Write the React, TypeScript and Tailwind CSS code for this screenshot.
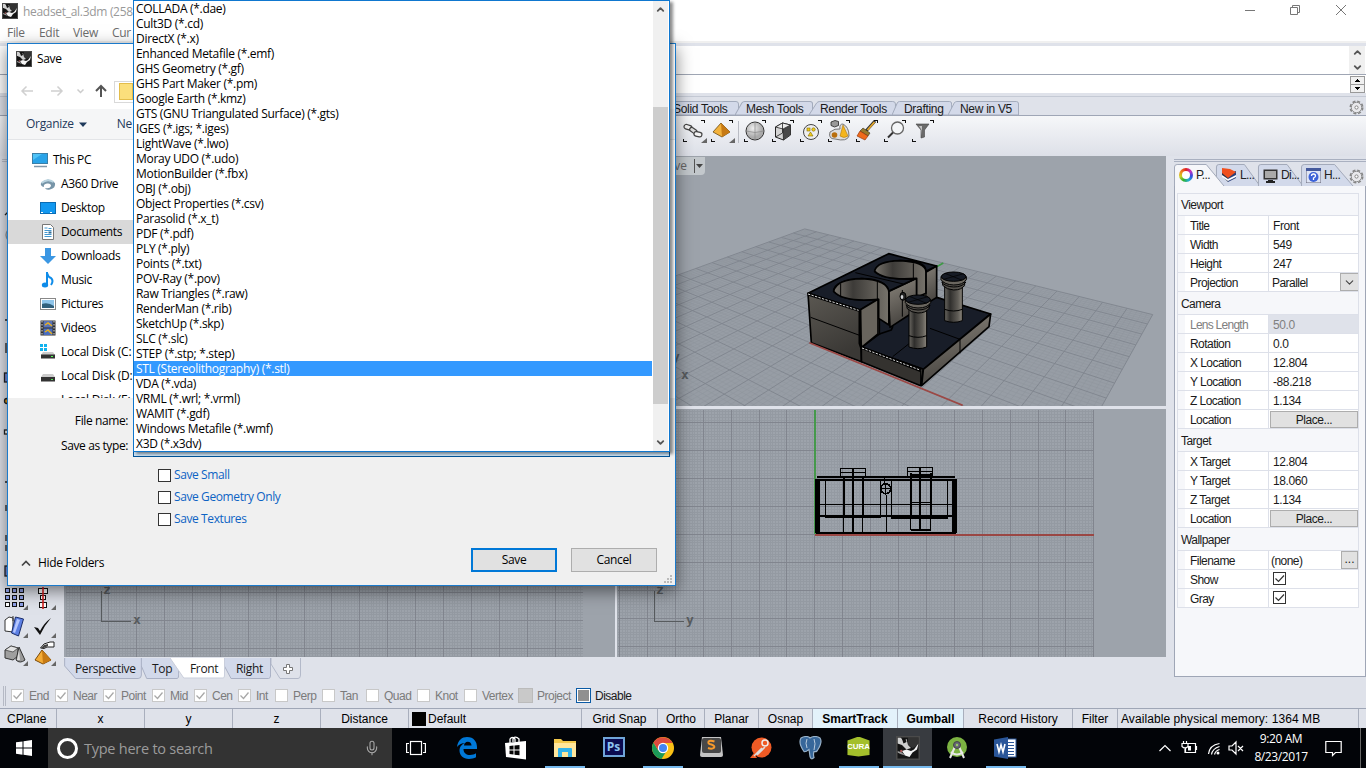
import React from "react";
import { ChevronDown, ChevronUp, Mic } from "lucide-react";

const SEGOE = "font-['Open_Sans','Noto_Sans',sans-serif]";
const ARIAL = "font-['Liberation_Sans',sans-serif]";

function RhinoIcon({ size = 16 }: { size?: number }) {
  return (
    <svg width={size} height={size} viewBox="0 0 16 16" className="shrink-0">
      <rect width="16" height="16" fill="#161616" />
      <path d="M8 1h7v5l-4 2-3-2z" fill="#333" />
      <path d="M1 1h2l2 2 2-1 1 4 2 2-3 1-3-3-3-1z" fill="#cfcfcf" />
      <path d="M4 2l2-1 1 3-2 1zM1 5l3 2v3L1 9z" fill="#111" />
      <path d="M15 5l-1 4-3 2-2 3-3-1-2-3 3-1 3 1 2-1z" fill="#f4f4f4" />
      <path d="M1 10l3 1 2 2-3-1-2-1z" fill="#9a9a9a" />
      <circle cx="3.500" cy="10" r=".8" fill="#a55" />
      <rect x=".5" y=".5" width="15" height="15" fill="none" stroke="#4a4a4a" />
    </svg>
  );
}

function Gear() {
  return (
    <svg width="15" height="15" viewBox="0 0 15 15" className="shrink-0">
      <circle cx="7.5" cy="7.5" r="6.2" fill="none" stroke="#858585" strokeWidth="1.6" strokeDasharray="3 1.87" />
      <circle cx="7.5" cy="7.5" r="5.2" fill="#e9e9ec" stroke="#858585" strokeWidth=".9" />
      <circle cx="7.5" cy="7.5" r="1.6" fill="#fff" stroke="#858585" />
    </svg>
  );
}

/* ---------- window header ---------- */

function TitleBar() {
  return (
    <div className={`flex h-[22px] items-center bg-white pl-[2px] ${SEGOE}`}>
      <RhinoIcon />
      <span className="mt-px ml-[5px] grow text-[12px] tracking-[-0.3px] text-[#999]">headset_al.3dm (258</span>
      <svg width="126" height="22" viewBox="1240 0 126 22" fill="none" stroke="#777">
        <path d="M1245 10.5h10" />
        <path d="M1290.500 7.500h7v7h-7zM1292.500 7.500v-2h7v7h-2" />
        <path d="M1336 5l10 10M1346 5l-10 10" />
      </svg>
    </div>
  );
}

function MenuBar() {
  return (
    <div className={`flex h-[19px] items-center bg-white pt-[2px] pl-[7px] text-[12px] tracking-[-0.3px] text-[#6d6d6d] ${SEGOE}`}>
      <span className="w-[32px]">File</span>
      <span className="w-[34px]">Edit</span>
      <span className="w-[39px]">View</span>
      <span>Cur</span>
    </div>
  );
}

function CommandArea() {
  return (
    <div className="flex h-[55px] shrink-0 flex-col border-t-2 border-[#f0f0f0] bg-[#dfe2ea] pt-[3px]">
      <div className="flex h-[29px] justify-end border-b border-[#9fa6b4] bg-white">
        <div className="mr-[1px] flex w-4 flex-col items-center justify-between bg-[#f0f0f0] py-[1px] text-[#555]">
          <ChevronUp size={11} strokeWidth={4} />
          <ChevronDown size={11} strokeWidth={4} />
        </div>
      </div>
      <div className="flex h-[18px] justify-end bg-white">
        <svg width="17" height="18" viewBox="0 0 17 18" shapeRendering="crispEdges">
          <rect x="1" y="1" width="14" height="8" fill="#f0f0f0" stroke="#999" />
          <rect x="1" y="9" width="14" height="8" fill="#f0f0f0" stroke="#999" />
          <path d="M5 7h6l-3-3zM5 12h6l-3 3z" />
        </svg>
      </div>
    </div>
  );
}

const toolTabs = [
  { t: "Solid Tools", c: "w-[79px] pl-[13px]" },
  { t: "Mesh Tools", c: "w-[78px] pl-[11px]" },
  { t: "Render Tools", c: "w-[87px] pl-[11px]" },
  { t: "Drafting", c: "w-[60px] pl-[12px]" },
  { t: "New in V5", c: "w-[71px] pl-[12px]" },
];

function ToolTabs() {
  return (
    <div className="flex h-[20px] shrink-0 items-end border-y border-t-[#c5cad5] border-b-[#9fa6b6] bg-[#dfe2ea] pl-[660px]">
      {toolTabs.map((tab) => (
        <div key={tab.t} className={`relative -mr-1 flex h-[14px] items-center ${tab.c}`}>
          <svg className="absolute inset-0 h-full w-full" viewBox="0 0 80 14" preserveAspectRatio="none">
            <path d="M0 14L7 2Q8 .5 10 .5H77Q79.500 .5 79.500 3V14z" fill="#d3d9e9" stroke="#a3abbc" vectorEffect="non-scaling-stroke" />
          </svg>
          <span className={`relative mt-px whitespace-nowrap text-[12px] leading-none tracking-[-0.3px] text-[#1a1a1a] ${ARIAL}`}>{tab.t}</span>
        </div>
      ))}
      <div className="grow" />
      <div className="mr-[2px]"><Gear /></div>
    </div>
  );
}

function ToolCell({ children, menu }: { children: React.ReactNode; menu?: boolean }) {
  return (
    <svg width="28" height="26" viewBox="0 0 28 26" className="shrink-0">
      {children}
      <path d="M21 1.500h3.500V4M3.500 20v2.500H7" fill="none" stroke="#111" shapeRendering="crispEdges" />
      {menu && <path d="M27 19v5h-6z" fill="#666" />}
    </svg>
  );
}

function ToolBar() {
  return (
    <div className="flex h-[40px] shrink-0 items-start bg-gradient-to-b from-[#f6f7f9] to-[#dde0e8] pt-[3px] pl-[680px]">
      <ToolCell menu>
        <g fill="none" stroke="#444" strokeWidth="1.200">
          <rect x="4" y="6" width="8" height="4.500" rx="2.200" transform="rotate(18 8 8)" fill="#f4f4f4" />
          <rect x="9" y="9.500" width="8" height="4" rx="2" transform="rotate(35 13 12)" fill="#ddd" />
          <rect x="14" y="13" width="8" height="4.500" rx="2.200" transform="rotate(12 18 15)" fill="#f4f4f4" />
        </g>
      </ToolCell>
      <ToolCell menu>
        <path d="M13 4L22 13l-8 5-9-5z" fill="#f2b23c" stroke="#6b4a10" strokeWidth=".8" />
        <path d="M13 4l1 14 8-5z" fill="#c77a14" />
      </ToolCell>
      <div className="mx-[2px] mt-[2px] h-[22px] w-px bg-[#b9bcc4]" />
      <ToolCell>
        <defs>
          <radialGradient id="ball" cx=".4" cy=".35"><stop offset="0" stopColor="#eee" /><stop offset="1" stopColor="#aaa" /></radialGradient>
        </defs>
        <circle cx="14" cy="12" r="9" fill="url(#ball)" stroke="#333" />
        <path d="M5 12q9 3 18 0M14 3v18" fill="none" stroke="#888" strokeWidth=".7" />
      </ToolCell>
      <ToolCell>
        <path d="M6.500 8l7-4 8 2v10l-7 5-8-3z" fill="#d4d4d4" stroke="#222" />
        <path d="M14 10l7.500-4v10l-7 5z" fill="#484848" />
        <path d="M6.500 8l7.500 2 7.500-4-8-2z" fill="#ededed" stroke="#222" strokeWidth=".8" />
        <path d="M14 10l.5 11M6.500 18l7-4V4" fill="none" stroke="#222" strokeWidth=".8" />
      </ToolCell>
      <ToolCell>
        <circle cx="14" cy="13" r="7.500" fill="#eee" stroke="#444" />
        <g fill="#f1cd1b" stroke="#806a00" strokeWidth=".6"><rect x="10" y="9" width="3" height="3" /><circle cx="16.500" cy="10.500" r="1.700" /><path d="M11 17h5l-2.500-4z" /></g>
      </ToolCell>
      <ToolCell>
        <path d="M5 13q-2 7 5 7 12 3 14-3 0-9-6-12-4 0-3 5-5-1-10 3z" fill="#ddd" stroke="#777" />
        <circle cx="9.500" cy="16" r="2.800" fill="#b86e0c" />
        <path d="M15 17l3-11 5 11q-4 3-8 0z" fill="#f4b51c" stroke="#a66c00" strokeWidth=".5" />
        <path d="M6 3l4-1.500 3.500 1v4l-4 1.500-3.500-1.500z" fill="#999" stroke="#222" strokeWidth=".8" />
      </ToolCell>
      <ToolCell>
        <path d="M22 2l-9 10" stroke="#333" strokeWidth="3" />
        <path d="M21.500 3l-7 8" stroke="#e3a72c" strokeWidth="1.800" />
        <path d="M10 9l7 5-2 3-8-5z" fill="#9a7a2a" stroke="#332" strokeWidth=".6" />
        <path d="M7 12l8 5-3 4-8-4z" fill="#ef6a1a" stroke="#8b2a00" strokeWidth=".6" />
      </ToolCell>
      <ToolCell>
        <circle cx="16.500" cy="9" r="6" fill="#f4f6f8" stroke="#666" strokeWidth="1.300" />
        <path d="M12 13.500L7 18.500" stroke="#333" strokeWidth="2" />
      </ToolCell>
      <ToolCell>
        <path d="M7 5h13l-4.500 6v7l-3.500 1v-8z" fill="#6a6a6a" stroke="#444" strokeWidth=".6" />
        <path d="M10 7h3v10l-.5-6z" fill="#c4c4c4" />
      </ToolCell>
    </div>
  );
}

/* ---------- viewports ---------- */

function range(n: number) {
  return Array.from({ length: n }, (_, i) => i);
}

function OrthoGrid(p: { x0: number; x1: number; y0: number; y1: number; mx: number; my: number; step: number }) {
  const minor: string[] = [];
  const major: string[] = [];
  const s = p.step / 10;
  for (let k = -300; k <= 300; k++) {
    const x = Math.round(p.mx + k * s) + 0.5;
    const y = Math.round(p.my + k * s) + 0.5;
    const list = k % 10 === 0 ? major : minor;
    if (x >= p.x0 && x <= p.x1) list.push(`M${x} ${p.y0}V${p.y1}`);
    if (y >= p.y0 && y <= p.y1) list.push(`M${p.x0} ${y}H${p.x1}`);
  }
  return (
    <g fill="none" shapeRendering="crispEdges">
      <path d={minor.join("")} stroke="#949aa2" />
      <path d={major.join("")} stroke="#81858e" />
    </g>
  );
}

function AxisMark({ x, y, a, b }: { x: number; y: number; a: string; b: string }) {
  return (
    <g fill="#575b5e" className="font-['DejaVu_Sans_Mono',monospace] text-[13px] font-bold">
      <path d={`M${x + 0.5} ${y - 30}V${y + 0.5}h29`} fill="none" stroke="#575b5e" shapeRendering="crispEdges" />
      <text x={x + 2} y={y - 27}>{b}</text>
      <text x={x + 32} y={y + 2.5}>{a}</text>
    </g>
  );
}

function project(u: number, v: number) {
  const w = 1 - 0.2815 * u + 0.372 * v;
  return `${((810 - 36.8 * u + 483.8 * v) / w).toFixed(1)} ${((342.7 - 17.7 * u + 18.1 * v) / w).toFixed(1)}`;
}

function PerspectiveGrid() {
  const minor: string[] = [];
  const major: string[] = [];
  for (const i of range(101)) {
    const t = -1 + i / 50;
    const list = i % 5 === 0 ? major : minor;
    list.push(`M${project(t, -1)}L${project(t, 1)}M${project(-1, t)}L${project(1, t)}`);
  }
  return (
    <g fill="none">
      <path d={`M${project(-1, 1)}L${project(1, 1)}L${project(1, -1)}L${project(-1, -1)}z`} fill="#979da5" />
      <path d={minor.join("")} stroke="#8f959d" strokeWidth=".5" />
      <path d={major.join("")} stroke="#7f848d" strokeWidth=".9" />
    </g>
  );
}

function Post({ x, y, h }: { x: number; y: number; h: number }) {
  return (
    <g transform={`translate(${x} ${y})`} stroke="#000" strokeWidth="3">
      <path d={`M-27 30V${h - 6}Q0 ${h + 4} 26 ${h - 6}V30z`} fill="url(#post)" />
      <path d={`M-27 ${h - 40}Q0 ${h - 30} 26 ${h - 40}`} fill="none" strokeWidth="3" />
      <path d="M-33 14v12q12 13 33 14 24 0 33-14v-12" fill="#55524d" />
      <path d="M-38 0v9q10 15 38 16 29 0 38-16V0z" fill="#6a665f" />
      <path d="M-37 16q12 14 37 15 26 0 37-15" fill="none" />
      <ellipse cx="0" cy="0" rx="37" ry="14" fill="#161b25" />
      <path d="M-30 8L30-9M-26-10L26 11" strokeWidth="2" />
    </g>
  );
}

function HeadsetModel() {
  return (
    <g transform="translate(670 210) scale(.33333)" strokeLinejoin="round">
      <defs>
        <linearGradient id="post"><stop offset="0" stopColor="#6b6862" /><stop offset=".3" stopColor="#2f2e2c" /><stop offset=".75" stopColor="#5f5c56" /><stop offset="1" stopColor="#8a857c" /></linearGradient>
        <linearGradient id="bore"><stop offset="0" stopColor="#77736c" /><stop offset=".35" stopColor="#3d3b38" /><stop offset="1" stopColor="#77736b" /></linearGradient>
        <linearGradient id="face" x2=".4" y2="1"><stop offset="0" stopColor="#5b5852" /><stop offset="1" stopColor="#3a3835" /></linearGradient>
        <linearGradient id="side" x2=".3" y2="1"><stop offset="0" stopColor="#8b867d" /><stop offset="1" stopColor="#45423e" /></linearGradient>
      </defs>
      <path d="M800 170L820 159" stroke="#3f9a46" strokeWidth="5" />
      <g stroke="#000" strokeWidth="5">
        <path d="M574 412L740 290L800 262L962 312L760 478z" fill="#181d28" />
        <path d="M574 412L760 478L752 527L574 455z" fill="#34322f" />
        <path d="M760 478L962 312L957 350L755 527z" fill="url(#side)" />
        <path d="M628 320L668 350L664 360L628 372z" fill="#181d28" />
        <path d="M740 205L770 185L800 168V262L740 300z" fill="url(#side)" />
        <path d="M655 245L740 205V300L660 352z" fill="url(#side)" />
        <path d="M414 250L656 131L800 168L768 184Q768 150 690 152Q618 160 614 185Q640 210 735 207L655 244Q650 208 575 206Q492 212 491 244Q520 275 624 268L570 300z" fill="#181d28" />
        <path d="M614 183Q620 154 690 152Q768 156 768 186V250L740 262V205Q640 212 614 183z" fill="url(#bore)" />
        <path d="M491 244Q498 208 575 206Q655 210 657 248V345L626 325V268Q520 278 491 244z" fill="url(#bore)" />
        <path d="M414 250L570 300L574 455L424 398z" fill="url(#face)" />
        <path d="M570 300L624 268V372L580 408L574 412z" fill="#68645d" />
      </g>
      <path d="M422 322L574 378M556 188L700 222M656 345V240M768 184V258M730 160V205M512 222V262M622 214V270M697 240V320M780 355L870 388V430M716 402L668 440M752 482V527M574 412V455" fill="none" stroke="#000" strokeWidth="3" />
      <path d="M414 252L570 302V400L574 412L752 482" fill="none" stroke="#000" strokeWidth="9" />
      <path d="M414 252L566 301M576 414L750 480" fill="none" stroke="#d9d9d9" strokeWidth="3" strokeDasharray="7 4" />
      <ellipse cx="699" cy="259" rx="9" ry="12" fill="#222" stroke="#000" strokeWidth="3" />
      <ellipse cx="696" cy="261" rx="4" ry="6" fill="#cfd2d6" />
      <Post x={851} y={200} h={138} />
      <Post x={744} y={269} h={148} />
      <path d="M418 398L878 586" stroke="#9c4845" strokeWidth="5" />
    </g>
  );
}

function RightWireframe() {
  return (
    <g transform="translate(600 400) scale(.33333)" fill="none" stroke="#000" shapeRendering="crispEdges">
      <path d="M645 30V402" stroke="#46994b" strokeWidth="5" />
      <path d="M645 404.500H1482" stroke="#9a4744" strokeWidth="6" />
      <path d="M652 236V400M1064 236V400" strokeWidth="14" />
      <path d="M652 231H1066M652 239H1066M648 399H1068" strokeWidth="6" />
      <path d="M660 348H1058M676 351H842M874 353H1044M932 224H998" strokeWidth="6" />
      <path d="M732 231V346M759 206V400M789 231V346M934 220V350M960 203V392M993 220V346M932 390H992" strokeWidth="6" />
      <path d="M660 313.500H1058M936 307.500H996M676.500 238V351M842 238V351M859 284V399M855 231V250M874.500 238V353M1042.500 238V350M731 346V399M788 346V399M931.500 350V390M992 346V390M721 217H797M922 216H998" strokeWidth="3" />
      <path d="M721 206H797V230H721zM922 203H998V230H922z" strokeWidth="4" />
      <path d="M841 266H875M857 250V284" strokeWidth="4" />
      <circle cx="857" cy="266" r="15" strokeWidth="5" />
    </g>
  );
}

function Viewports() {
  return (
    <div className="flex h-[502px] w-[1102px] shrink-0 gap-[2px] bg-[#dfe2ea]">
      <div className="h-[501px] w-[551px] bg-[#9da3ab]">
        <svg width="551" height="501" viewBox="64 156 551 501">
          <OrthoGrid x0={66} x1={583} y0={410} y1={657} mx={80} my={592} step={27.94} />
          <AxisMark x={101} y={621} a="x" b="z" />
        </svg>
      </div>
      <div className="flex flex-col gap-[3px]">
        <div className="relative h-[250px] w-[549px] bg-[#9da3ab]">
          <svg width="549" height="250" viewBox="617 156 549 250">
            <PerspectiveGrid />
            <g fill="#575b5e" className="font-['DejaVu_Sans_Mono',monospace] text-[13px] font-bold"><text x="672" y="361">y</text><text x="681" y="379">x</text></g>
            <HeadsetModel />
          </svg>
          <div className={`absolute top-px left-0 flex h-[18px] w-[88px] items-center justify-end rounded-br bg-[#c3c8cc] text-[12px] text-[#666] ${SEGOE}`}>
            <span>Perspective</span>
            <svg width="18" height="16" viewBox="0 0 18 16"><path d="M7.500 1v14" stroke="#555" /><path d="M9 6h7l-3.500 4z" fill="#444" /></svg>
          </div>
        </div>
        <svg width="549" height="248" viewBox="617 409 549 248" className="bg-[#9da3ab]">
          <OrthoGrid x0={618} x1={1094} y0={410} y1={657} mx={619} my={534} step={27.9} />
          <RightWireframe />
          <AxisMark x={654} y={621} a="y" b="z" />
        </svg>
      </div>
    </div>
  );
}

function SideTools() {
  return (
    <svg width="64" height="527" viewBox="0 156 64 527" className="shrink-0">
      <path d="M2 159.500h60M2 161.500h60" stroke="#b9bdc8" shapeRendering="crispEdges" />
      <g stroke="#222" strokeWidth="1.300">
        <path d="M5 215l3-3M5 320h3M6 343v10M5 482h4M6 505v6M6 535v6M6 545v6" />
        <path d="M8 230q-4 5 0 10" stroke="#999" fill="none" />
        <rect x="4.500" y="373" width="8" height="9" fill="#7a8ee0" />
        <rect x="4.500" y="430" width="5" height="4" fill="#fff" />
        <rect x="5" y="566" width="8" height="10" fill="#7a8ee0" />
        <circle cx="7" cy="401" r="2.500" fill="#e89a1a" />
      </g>
      <g stroke="#111" strokeWidth="1">
        {range(9).map((i) => (
          <rect key={i} x={5.5 + (i % 3) * 7} y={588.5 + Math.floor(i / 3) * 7} width="4" height="4" fill={i === 6 ? "#fff" : "#8ea0e8"} />
        ))}
      </g>
      <g stroke="#111" fill="#fff"><rect x="38.500" y="588.500" width="9" height="5" /><rect x="40.500" y="595.500" width="5" height="4" /><rect x="39.500" y="602.500" width="7" height="5" /></g>
      <path d="M43 587v22" stroke="#d32020" strokeWidth="1.600" />
      <path d="M28 605v5h-5zM56 605v5h-5zM28 633v5h-5zM56 633v5h-5zM28 661v5h-5zM56 661v5h-5z" fill="#666" />
      <path d="M5 620l4-3 4 1v14l-8-1z" fill="#fff" stroke="#333" />
      <path d="M13 616v5" stroke="#333" />
      <path d="M15.500 617l8 2-5 17-7-3z" fill="#5d80e4" stroke="#1c2e6b" /><path d="M17 619l3 1-5 13-2-1z" fill="#b5c6ff" />
      <path d="M34 627l4 1 2 3q4-8 11-13-7 8-11 17z" fill="#111" />
      <path d="M5 650l6-4 7 2v8l-5 4-8-2z" fill="#9f9f9f" stroke="#333" /><path d="M5 650l6-4 7 2-5 4z" fill="#e2e2e2" stroke="#333" strokeWidth=".7" />
      <path d="M19 647l6 13q-5 4-9 0z" fill="#999" stroke="#333" /><path d="M19 650l1 10h-3z" fill="#ddd" />
      <path d="M42 650l9 10-8 4-8-4z" fill="#f3ab35" stroke="#7a4a08" /><path d="M42 650l1 14 8-4z" fill="#c77a14" />
      <path d="M40.500 648l3.500-4 6-2h4v5h-7l-3 1.500z" fill="#fff" stroke="#222" />
      <path d="M41 648l3-3 4-1v2l-4 2z" fill="#444" />
    </svg>
  );
}

const viewTabs = [
  { t: "Perspective", c: "w-[78px] pl-[11px]", on: false },
  { t: "Top", c: "w-[38px] pl-[11px]", on: false },
  { t: "Front", c: "w-[55px] pl-[20px]", on: true },
  { t: "Right", c: "w-[47px] pl-[12px]", on: false },
];

function ViewTabs() {
  return (
    <div className="flex h-[25px] items-start">
      {viewTabs.map((tab) => (
        <div key={tab.t} className={`relative -mr-[1px] flex h-[21px] items-center ${tab.on ? "z-10 -ml-[8px]" : ""} ${tab.c}`}>
          <svg className="absolute inset-0 h-full w-full" viewBox="0 0 60 21" preserveAspectRatio="none">
            <path d={tab.on ? "M0 0L15 20H58Q59.500 20 59.500 17V0" : "M.5 0V8L9 20.500H57Q59.500 20.500 59.500 17V0"} fill={tab.on ? "#fff" : "#d2d9ea"} stroke={tab.on ? "#c9cedb" : "#a9b0c4"} vectorEffect="non-scaling-stroke" />
          </svg>
          <span className={`relative mt-px text-[12px] tracking-[-0.35px] text-[#1a1a1a] ${SEGOE}`}>{tab.t}</span>
        </div>
      ))}
      <svg width="32" height="21" viewBox="2 0 32 21" fill="none">
        <path d="M3 0V6L12 20.500H30Q32.500 20.500 32.500 17V0" stroke="#b3b9c9" />
        <path d="M18.500 6.500h3v3h3v3h-3v3h-3v-3h-3v-3h3z" fill="#fff" stroke="#777" />
      </svg>
    </div>
  );
}

/* ---------- properties panel ---------- */

type Row = { k: string; v: string; kind?: "button" | "check" | "disabled" | "select" | "file" };
const groups: { name: string; rows: Row[] }[] = [
  { name: "Viewport", rows: [{ k: "Title", v: "Front" }, { k: "Width", v: "549" }, { k: "Height", v: "247" }, { k: "Projection", v: "Parallel", kind: "select" }] },
  { name: "Camera", rows: [{ k: "Lens Length", v: "50.0", kind: "disabled" }, { k: "Rotation", v: "0.0" }, { k: "X Location", v: "12.804" }, { k: "Y Location", v: "-88.218" }, { k: "Z Location", v: "1.134" }, { k: "Location", v: "Place...", kind: "button" }] },
  { name: "Target", rows: [{ k: "X Target", v: "12.804" }, { k: "Y Target", v: "18.060" }, { k: "Z Target", v: "1.134" }, { k: "Location", v: "Place...", kind: "button" }] },
  { name: "Wallpaper", rows: [{ k: "Filename", v: "(none)", kind: "file" }, { k: "Show", v: "", kind: "check" }, { k: "Gray", v: "", kind: "check" }] },
];

function Value({ row }: { row: Row }) {
  if (row.kind === "button") return <button className="ml-[1px] h-[17px] w-[88px] border border-[#adadad] bg-[#e1e1e1] pt-px leading-[14px] tracking-[-0.45px]">{row.v}</button>;
  if (row.kind === "check")
    return (
      <svg width="15" height="15" viewBox="0 0 15 15" className="-mt-px ml-[3px]">
        <rect x="1.500" y="1.500" width="12" height="12" fill="#fff" stroke="#333" />
        <path d="M3.500 7.500l3 3L12 4.500" fill="none" stroke="#333" strokeWidth="1.200" />
      </svg>
    );
  if (row.kind === "select")
    return (
      <>
        <span className="grow pt-[2px] pl-[3px]">{row.v}</span>
        <span className="flex h-[18px] w-[18px] items-center justify-center border border-r-0 border-[#adadad] bg-[#e1e1e1] text-[#444]"><ChevronDown size={13} /></span>
      </>
    );
  if (row.kind === "file")
    return (
      <>
        <span className="grow pt-[2px] pl-[2px]">{row.v}</span>
        <span className="flex h-[18px] w-[17px] justify-center border border-[#adadad] bg-[#e1e1e1] pt-px tracking-normal">...</span>
      </>
    );
  return <span className="pt-[2px] pl-[4px] tracking-[-0.4px]">{row.v}</span>;
}

function PanelTabs() {
  const tab = "relative flex h-[22px] items-center gap-[3px] pl-[5px]";
  const label = "relative text-[12px] tracking-[-0.6px] text-[#222]";
  const shape = (on: boolean) => (
    <svg className="absolute inset-0 h-full w-full overflow-visible" viewBox="0 0 48 22" preserveAspectRatio="none">
      <path d="M.5 22V3Q.5 .5 3 .5H31L48 22" fill={on ? "#f6f7fa" : "#d2d9ea"} stroke="#a3aaba" vectorEffect="non-scaling-stroke" />
    </svg>
  );
  return (
    <div className="flex h-[22px] items-end">
      <div className={`${tab} z-10 w-[50px]`}>{shape(true)}
        <div className="relative h-[14px] w-[14px] rounded-full bg-[conic-gradient(#e02020,#c030c0,#3050e0,#20b0d0,#30b030,#d0d020,#f08020,#e02020)] p-[3px]"><div className="h-2 w-2 rounded-full bg-white" /></div>
        <span className={label}>P...</span>
      </div>
      <div className={`${tab} -ml-[8px] w-[44px]`}>{shape(false)}
        <svg className="relative" width="16" height="16" viewBox="0 0 16 16"><path d="M1 2l6 4v9l-6-6z" fill="#2b3448" /><path d="M7 6l8-2v7l-8 4z" fill="#2a3f78" /><path d="M1 8l6 4 8-4v2l-8 4-6-4z" fill="#fff" /><path d="M1 1l8 1 6 3-8 6-6-5z" fill="#f0501e" /></svg>
        <span className={label}>L...</span>
      </div>
      <div className={`${tab} -ml-[2px] w-[45px]`}>{shape(false)}
        <svg className="relative" width="15" height="15" viewBox="0 0 15 15"><rect x=".5" y="1.500" width="14" height="10" fill="#333" /><rect x="2" y="3" width="11" height="7" fill="#aaa" /><path d="M5 12h5v1h2v2H3v-2h2z" fill="#222" /></svg>
        <span className={label}>Di...</span>
      </div>
      <div className={`${tab} -ml-[2px] w-[52px]`}>{shape(false)}
        <svg className="relative" width="15" height="15" viewBox="0 0 15 15"><rect width="15" height="15" fill="#dfe5f5" stroke="#667" /><rect width="15" height="3" fill="#44599c" /><circle cx="7.500" cy="9" r="5" fill="#3c62d8" /><path d="M5.500 8q0-2 2-2t2 2q0 1-2 2v2" fill="none" stroke="#fff" strokeWidth="1.300" /></svg>
        <span className={label}>H...</span>
      </div>
      <div className="relative z-10 -ml-[4px] mb-[2px]"><Gear /></div>
    </div>
  );
}

function PropertiesPanel() {
  return (
    <div className={`ml-[8px] flex h-[521px] w-[192px] shrink-0 flex-col pt-[3px] text-[12px] leading-none text-[#1a1a1a] ${ARIAL}`}>
      <div className="mb-[2px] h-[3px] shrink-0 border-y border-[#a9b0c0]" />
      <PanelTabs />
      <div className="grow border border-t-0 border-[#9fa6b6] bg-[#f6f7fa] pt-[7px] pl-[2px]">
        <div className="w-[182px] border-x border-t border-[#dde0e9] tracking-[-0.55px]">
          {groups.map((g, gi) => (
            <div key={g.name}>
              <div className={`flex items-center border-b border-[#dde0e9] pl-[3px] ${gi ? "h-[23px] pt-px" : "h-[22px] pt-px"}`}>{g.name}</div>
              {g.rows.map((r) => (
                <div key={r.k} className={`flex h-[19px] border-b border-[#dde0e9] pl-[7px] ${r.kind === "disabled" ? "text-[#808080]" : ""}`}>
                  <div className={`flex w-[84px] items-center border-r border-[#dde0e9] bg-white pt-[2px] pl-[5px] ${r.kind === "disabled" ? "tracking-[-0.75px]" : ""}`}>{r.k}</div>
                  <div className={`flex grow items-center ${r.kind === "disabled" ? "bg-[#dfe2ea]" : "bg-white"}`}><Value row={r} /></div>
                </div>
              ))}
            </div>
          ))}
        </div>
      </div>
    </div>
  );
}

/* ---------- bottom bars ---------- */

const snaps = [
  { t: "End", c: "w-[44px]", on: true }, { t: "Near", c: "w-[48px]", on: true }, { t: "Point", c: "w-[49px]", on: true },
  { t: "Mid", c: "w-[42px]", on: true }, { t: "Cen", c: "w-[44px]", on: true }, { t: "Int", c: "w-[37px]", on: true },
  { t: "Perp", c: "w-[47px]", on: false }, { t: "Tan", c: "w-[44px]", on: false }, { t: "Quad", c: "w-[51px]", on: false },
  { t: "Knot", c: "w-[47px]", on: false }, { t: "Vertex", c: "w-[54px]", on: false },
];

function SnapBar() {
  return (
    <div className={`flex h-[25px] shrink-0 items-center text-[12px] tracking-[-0.5px] text-[#7b7b7b] ${ARIAL}`}>
      <div className="mr-[5px] ml-[3px] h-[20px] w-[3px] border-x border-[#b5b9c4]" />
      {snaps.map((s) => (
        <div key={s.t} className={`flex shrink-0 items-center gap-[5px] ${s.c}`}>
          <svg width="13" height="13" viewBox="0 0 13 13" className="shrink-0">
            <rect x=".5" y=".5" width="12" height="12" fill="#fff" stroke="#c8c8c8" />
            {s.on && <path d="M2.500 6.500l3 3 5-6" fill="none" stroke="#a8a8a8" strokeWidth="1.300" />}
          </svg>
          <span className="pt-px">{s.t}</span>
        </div>
      ))}
      <div className="flex w-[58px] shrink-0 items-center gap-[4px]"><div className="h-[15px] w-[15px] border border-[#bbb] bg-[#c9c9c9]" /><span className="pt-px">Project</span></div>
      <div className="flex items-center gap-[4px] text-[#1a1a1a]"><div className="h-[15px] w-[15px] border border-[#0a5aa5] bg-[#909090] outline-1 -outline-offset-2 outline-white" /><span className="pt-px">Disable</span></div>
    </div>
  );
}

const statusCells = [
  { t: "CPlane", c: "w-[57px] pl-[7px]" }, { t: "x", c: "w-[88px] justify-center" }, { t: "y", c: "w-[88px] justify-center" },
  { t: "z", c: "w-[88px] justify-center" }, { t: "Distance", c: "w-[88px] justify-center" }, { t: "Default", c: "w-[173px] pl-[3px]" },
  { t: "Grid Snap", c: "w-[76px] justify-center" }, { t: "Ortho", c: "w-[47px] justify-center" }, { t: "Planar", c: "w-[54px] justify-center" },
  { t: "Osnap", c: "w-[54px] justify-center" }, { t: "SmartTrack", c: "w-[85px] justify-center bg-[#e3f2fb] font-bold" },
  { t: "Gumball", c: "w-[66px] justify-center bg-[#e3f2fb] font-bold" }, { t: "Record History", c: "w-[109px] justify-center" },
  { t: "Filter", c: "w-[45px] justify-center" }, { t: "Available physical memory: 1364 MB", c: "w-[241px] pl-[3px] tracking-[0.08px]" },
];

function StatusBar() {
  return (
    <div className={`flex h-[20px] shrink-0 border-t border-[#9fa6b6] text-[12px] text-black ${ARIAL}`}>
      {statusCells.map((s) => (
        <div key={s.t} className={`flex shrink-0 items-center gap-[2px] border-r border-[#a9afbd] whitespace-nowrap ${s.c}`}>
          {s.t === "Default" && <div className="h-[14px] w-[14px] bg-black" />}
          {s.t}
        </div>
      ))}
    </div>
  );
}

function TaskIcon({ name }: { name: string }) {
  switch (name) {
    case "edge":
      return <svg width="22" height="22" viewBox="0 0 22 22"><path d="M1 10C2 3 6 0 11 0c7 0 10 5 10 10v2H7.500c0 4 3 6 6.500 6 2.500 0 4.500-.7 6-1.700v4C18 21.500 15.500 22 13 22 7 22 3.500 18 3.500 13.500 3.500 10 6 7 9 6 6 6 3 7.500 1 10zm7-1.500h7.500C15.500 6 14 4.700 11.800 4.700 9.500 4.700 8.300 6.500 8 8.500z" fill="#0078d7" /></svg>;
    case "store":
      return <svg width="23" height="24" viewBox="0 0 23 24"><path d="M1 7l21-2v18.500L2 21z" fill="#fff" /><path d="M6 7V3q2-3 5 0v3M9 6V2q3-2 6 1v3" fill="none" stroke="#fff" strokeWidth="1.300" /><path d="M5.500 10l4-.5v4h-4zM10.500 9.400l5-.4v4.500h-5zM5.500 14.500h4v4l-4-.5zM10.500 14.500h5v4.800l-5-.6z" fill="#050505" /></svg>;
    case "explorer":
      return <svg width="22" height="20" viewBox="0 0 22 20"><path d="M0 1h7l2 2h13v16H0z" fill="#f2c84b" /><path d="M0 5h22v14H0z" fill="#ffe69a" /><path d="M4 19v-8q0-1 1-1h12q1 0 1 1v8h-4v-5H8v5z" fill="#32b3ea" /></svg>;
    case "ps":
      return <div className={`-mt-[3px] flex h-5 w-[22px] items-center justify-center border-2 border-[#6fa5d8] bg-[#0b0b50] text-[12px] font-bold text-[#8dc3f0] ${SEGOE}`}>Ps</div>;
    case "chrome":
      return <svg width="22" height="22" viewBox="0 0 22 22"><circle cx="11" cy="11" r="11" fill="#fbc116" /><path d="M1.500 5.500A11 11 0 0 0 9.500 21.900L14.500 14 6 13z" fill="#1b9a57" /><path d="M1.500 5.500A11 11 0 0 1 20.600 6H11L6 13z" fill="#dd4b3e" /><circle cx="11" cy="11" r="5.200" fill="#fff" /><circle cx="11" cy="11" r="4" fill="#4285f4" /></svg>;
    case "sublime":
      return <svg width="23" height="20" viewBox="0 0 23 20" className="-mt-[2px]"><path d="M2 0h19l2 18q0 2-2 2H2q-2 0-2-2z" fill="#c4c4c4" /><rect x="2" y="1" width="19" height="15" rx="2" fill="#484848" /><path d="M14.500 4.500q-4.500-1.500-6 0-1 2.500 3 3Q15.500 9 14 10.800 12 12.500 8 11" fill="none" stroke="#f79a2c" strokeWidth="1.900" /></svg>;
    case "postman":
      return <svg width="22" height="22" viewBox="0 0 22 22"><circle cx="11.500" cy="10.500" r="10" fill="#ef5b25" /><path d="M0 21l4-5 3 5z" fill="#ef5b25" /><path d="M4 19l8-8M7 18l8-8" stroke="#ddd" strokeWidth="1.600" /><circle cx="15" cy="6" r="3" fill="#ef5b25" stroke="#eee" strokeWidth="1.500" /></svg>;
    case "pg":
      return <svg width="24" height="24" viewBox="0 0 24 24"><path d="M3 2q6-3 9 0 5-3 10 0 3 4-3 13-1 1-3 .5-1 3 0 6-3 3-4-1-.5-4-1-7-4 3-5 2Q0 7 3 2z" fill="#37679a" stroke="#9ab4cc" strokeWidth="1.200" /><path d="M9 3q-2 4 0 9M16 3q2 4 0 11" fill="none" stroke="#bcd" /></svg>;
    case "cura":
      return <div className={`-mt-[3px] flex h-5 w-6 items-center justify-center bg-[#a3bf2b] text-[8px] font-bold text-white [clip-path:polygon(50%_0,96%_20%,96%_92%,50%_100%,4%_92%,4%_20%)] ${ARIAL}`}>CURA</div>;
    case "rhino":
      return <RhinoIcon size={24} />;
    case "android":
      return <svg width="22" height="24" viewBox="0 0 22 24"><circle cx="11" cy="11" r="10" fill="#7cb342" /><path d="M11 6L4 22M11 6l7 16M5 16q6 5 12 0" fill="none" stroke="#e8e8e8" strokeWidth="2" /><circle cx="11" cy="9" r="3.500" fill="#667" stroke="#444" /><circle cx="11" cy="9" r="1.200" fill="#9c6" /></svg>;
    default:
      return <svg width="23" height="22" viewBox="0 0 23 22"><rect x="10" y="2" width="12" height="18" fill="#fff" stroke="#2a5699" /><path d="M13 5.500h7M13 8.500h7M13 11.500h7M13 14.500h7M13 17.500h7" stroke="#2a5699" /><path d="M0 2.500L14 0v22L0 19.500z" fill="#2a5699" /><path d="M3 7l2 8 2-7 2 7 2-8" fill="none" stroke="#fff" strokeWidth="1.600" /></svg>;
  }
}

const apps = ["edge", "store", "explorer", "ps", "chrome", "sublime", "postman", "pg", "cura", "rhino", "android", "word"];
const running = ["explorer", "chrome", "cura", "rhino", "word"];

function TaskBar() {
  return (
    <div className={`flex h-[40px] shrink-0 bg-[#020408] text-white ${SEGOE}`}>
      <div className="flex w-[48px] items-center justify-center">
        <svg width="16" height="16" viewBox="0 0 16 16" fill="#fff"><path d="M0 2.300L6.500 1.400v6.200H0zM7.500 1.200L16 0v7.600H7.500zM0 8.500h6.500v6.200L0 13.800zM7.500 8.500H16V16l-8.500-1.200z" /></svg>
      </div>
      <div className="flex w-[344px] items-center bg-[#333] pr-[12px] pl-[9px]">
        <div className="h-[21px] w-[21px] rounded-full border-[3px] border-white" />
        <span className="mt-px ml-[6px] grow text-[14.500px] tracking-[-0.25px] text-[#9b9b9b]">Type here to search</span>
        <Mic size={16} strokeWidth={1.600} className="text-[#aaa]" />
      </div>
      <div className="flex w-[50px] items-center justify-center pr-[2px]">
        <svg width="20" height="16" viewBox="0 0 20 16" fill="none" stroke="#fff" strokeWidth="1.200"><rect x="4.500" y="1.500" width="11" height="13" /><path d="M3 3.500H.6v9H3M17 3.500h2.400v9H17" /></svg>
      </div>
      {apps.map((a) => (
        <div key={a} className={`relative flex w-[49px] items-center justify-center ${a === "rhino" ? "bg-[#383b40]" : ""}`}>
          <TaskIcon name={a} />
          {running.includes(a) && <div className={`absolute bottom-0 h-[2px] bg-[#76b9ed] ${a === "rhino" ? "w-full" : "w-[40px]"}`} />}
        </div>
      ))}
      <div className="grow" />
      <svg width="92" height="40" viewBox="1156 728 92 40" fill="none" stroke="#fff" strokeWidth="1.200">
        <path d="M1159.500 751l5.500-5.500 5.500 5.500" />
        <path d="M1188 743.500h7.500v9h-10v-4M1196.500 746v4M1182 743.500h6v3q-3 3-6 0zM1183.500 741v2M1186.500 741v2M1185 749v4" />
        <rect x="1188" y="746" width="3" height="4.500" fill="#fff" stroke="none" />
        <path d="M1208.500 754q1-9 11-10.500M1211.500 754.500q1-6 8-8M1214.500 754.500q1-4 5-5" />
        <circle cx="1218" cy="753" r="1.500" fill="#fff" stroke="none" />
        <path d="M1229 746h3l4-4v12l-4-4h-3zM1238 746l5 5M1243 746l-5 5" />
      </svg>
      <div className="flex w-[66px] flex-col items-center justify-center text-[12px] leading-[18px] tracking-[-0.4px]"><span>9:20 AM</span><span>8/23/2017</span></div>
      <div className="flex w-[47px] items-center justify-center border-r border-[#666]">
        <svg width="17" height="17" viewBox="0 0 17 17" fill="none" stroke="#fff" strokeWidth="1.200" className="-ml-[7px]"><path d="M.8 1.500h15.400v11H10.500l-3 3v-3H.8z" /></svg>
      </div>
      <div className="w-[5px]" />
    </div>
  );
}

/* ---------- save dialog ---------- */

const icons: Record<string, React.ReactNode> = {
  pc: <><rect x=".5" y="1.500" width="15" height="10" fill="#4fc3f7" stroke="#3a7fa8" /><path d="M1 8l9-6h5v9H1z" fill="#29a3e8" /><path d="M2 14.500h13" stroke="#8097a8" strokeWidth="1.500" /></>,
  a360: <><path d="M1 7q7-7 14 0 1 5-5 6.500-4 1-5-1.500 5 1 6-2 0-3-4-2.500Q3 8 4 11 0 10 1 7z" fill="#7795a8" /><path d="M1.500 7q6-5 12-1" fill="none" stroke="#b9d3df" strokeWidth="1.800" /></>,
  desktop: <><rect x=".5" y="2.500" width="15" height="11" fill="#1298f0" stroke="#0a6cb4" /><path d="M1 12.500h14" stroke="#fff" strokeDasharray="2 7" /></>,
  docs: <><path d="M2.500 .5h8l3 3v12h-11z" fill="#fff" stroke="#777" /><path d="M4.500 4h3M8.500 4.500h3M4.500 6.500h7M4.500 8.500h3M4.500 10.500h7M4.500 12.500h7" stroke="#4398d0" /><path d="M8.500 8.500h3" stroke="#2d6a96" strokeWidth="2" /></>,
  down: <path d="M5 0h6v8h5l-8 8-8-8h5z" fill="#3b97e3" />,
  music: <><path d="M7 0v13M7 1q1 4 4 5 3 3 0 7" fill="none" stroke="#0f8ce9" strokeWidth="2" /><ellipse cx="5" cy="13" rx="3.200" ry="2.500" fill="#0f8ce9" /></>,
  pics: <><rect x=".5" y="2.500" width="15" height="11" fill="#fff" stroke="#888" /><rect x="2" y="4" width="12" height="8" fill="#8fc5ea" /><path d="M2 8q6-2 12 2v2H2z" fill="#31607c" /></>,
  video: <><rect x=".5" y=".5" width="15" height="15" fill="#333" /><rect x="3.500" y="1" width="9" height="6.500" fill="#5b74b8" /><rect x="3.500" y="8.500" width="9" height="6.500" fill="#4a6ec0" /><path d="M5 5l3-2 4 3M5 12l3-2 4 4" stroke="#e8b020" strokeWidth="1.500" fill="none" /><path d="M2 1v14M14 1v14" stroke="#ddd" strokeDasharray="1.500 1.500" /></>,
  diskc: <><path d="M0 0h3v3H0zM4 0h3v3H4zM0 4h3v3H0zM4 4h3v3H4z" fill="#12b2ee" /><path d="M3 8h10l2 3v3H1v-3z" fill="#ccc" /><rect x="1" y="10.500" width="14" height="4" fill="#333" /><path d="M11 12.500h2" stroke="#5f5" /></>,
  disk: <><path d="M3 6h10l2 3H1z" fill="#ccc" /><rect x="1" y="9" width="14" height="4.500" fill="#333" /><path d="M11 11.500h2" stroke="#5d5" /></>,
};

const tree = [
  { i: "pc", t: "This PC", c: "pl-[24px] gap-[5px]" }, { i: "a360", t: "A360 Drive", c: "pl-[32px] gap-[5px]" },
  { i: "desktop", t: "Desktop", c: "pl-[32px] gap-[5px]" }, { i: "docs", t: "Documents", c: "pl-[32px] gap-[5px] bg-[#d9d9d9]" },
  { i: "down", t: "Downloads", c: "pl-[32px] gap-[5px]" }, { i: "music", t: "Music", c: "pl-[32px] gap-[5px]" },
  { i: "pics", t: "Pictures", c: "pl-[32px] gap-[5px]" }, { i: "video", t: "Videos", c: "pl-[32px] gap-[5px]" },
  { i: "diskc", t: "Local Disk (C:", c: "pl-[32px] gap-[5px]" }, { i: "disk", t: "Local Disk (D:", c: "pl-[32px] gap-[5px]" },
  { i: "", t: "Local Disk (E:", c: "pl-[32px] gap-[5px]" },
];

const formats = [
  "COLLADA (*.dae)", "Cult3D (*.cd)", "DirectX (*.x)", "Enhanced Metafile (*.emf)", "GHS Geometry (*.gf)", "GHS Part Maker (*.pm)",
  "Google Earth (*.kmz)", "GTS (GNU Triangulated Surface) (*.gts)", "IGES (*.igs; *.iges)", "LightWave (*.lwo)", "Moray UDO (*.udo)",
  "MotionBuilder (*.fbx)", "OBJ (*.obj)", "Object Properties (*.csv)", "Parasolid (*.x_t)", "PDF (*.pdf)", "PLY (*.ply)",
  "Points (*.txt)", "POV-Ray (*.pov)", "Raw Triangles (*.raw)", "RenderMan (*.rib)", "SketchUp (*.skp)", "SLC (*.slc)",
  "STEP (*.stp; *.step)", "STL (Stereolithography) (*.stl)", "VDA (*.vda)", "VRML (*.wrl; *.vrml)", "WAMIT (*.gdf)",
  "Windows Metafile (*.wmf)", "X3D (*.x3dv)",
];

function SaveDialog() {
  return (
    <div className={`absolute top-[43px] left-[7px] z-20 flex h-[543px] w-[669px] flex-col border border-[#1b7acb] bg-white text-[12px] tracking-[-0.35px] text-black shadow-[0_5px_16px_rgba(0,0,0,0.5)] ${SEGOE}`}>
      <div className="flex h-[30px] shrink-0 items-center gap-[5px] pl-[8px]"><RhinoIcon />Save</div>
      <div className="flex h-[35px] shrink-0 items-center">
        <svg width="106" height="34" viewBox="8 74 106 34" fill="none" strokeWidth="1.500">
          <path d="M33 90H22M26.500 85.500L22 90l4.500 4.500M51 90h11M57.500 85.500L62 90l-4.500 4.500" stroke="#d0d0d0" />
          <path d="M77.500 88.500l3 3 3-3" stroke="#ccc" />
          <path d="M101 96V85M96 90l5-5 5 5" stroke="#555" strokeWidth="2" />
        </svg>
        <div className="mt-px h-[22px] w-[500px] border border-[#d9d9d9] py-[1px] pl-[4px]"><div className="h-[17px] w-[14px] border border-[#e3bd4b] bg-[#fbdf7c]" /></div>
      </div>
      <div className="flex h-[31px] shrink-0 items-center border-b border-[#e3e5e8] bg-[#f5f6f7] pl-[18px] text-[#1e395b]">
        <span className="tracking-[-0.3px]">Organize</span>
        <svg width="8" height="5" viewBox="0 0 8 5" className="ml-[5px]"><path d="M0 .5h8L4 5z" fill="#1e395b" /></svg>
        <span className="ml-[30px]">Ne</span>
      </div>
      <div className="h-[258px] w-[125px] shrink-0 overflow-hidden pt-[8px]">
        {tree.map((n) => (
          <div key={n.t} className={`flex h-[24px] items-center whitespace-nowrap ${n.c}`}>
            <svg width="16" height="16" viewBox="0 0 16 16" className="shrink-0">{icons[n.i]}</svg>
            <span className={n.t.startsWith("Local") ? "tracking-[-0.2px]" : ""}>{n.t}</span>
          </div>
        ))}
      </div>
      <div className="flex grow flex-col bg-[#f0f0f0]">
        <div className="flex h-[60px] w-[120px] flex-col items-end pt-[10px] leading-[25px] tracking-[-0.4px]"><span>File name:</span><span>Save as type:</span></div>
        <div className="mt-[6px] flex flex-col pl-[150px] text-[#0d63c4]">
          {["Save Small", "Save Geometry Only", "Save Textures"].map((t) => (
            <div key={t} className="flex h-[22px] items-center gap-[3px]"><div className="h-[13px] w-[13px] border border-[#333] bg-white" /><span className="tracking-[-0.4px]">{t}</span></div>
          ))}
        </div>
        <div className="mt-[17px] flex h-[26px] items-center pr-[18px]">
          <svg width="10" height="8" viewBox="0 0 10 8" className="mt-[6px] ml-[13px]"><path d="M1 6.500l4-4 4 4" fill="none" stroke="#444" strokeWidth="1.700" /></svg>
          <span className="mt-[6px] ml-[7px] grow">Hide Folders</span>
          <button className="h-[24px] w-[86px] border-2 border-[#0078d7] bg-[#e1e1e1] leading-[18px]">Save</button>
          <button className="ml-[14px] h-[24px] w-[86px] border border-[#adadad] bg-[#e1e1e1] leading-[18px]">Cancel</button>
        </div>
        <div className="grow" />
        <svg width="9" height="9" viewBox="0 0 9 9" className="mr-[2px] mb-[1px] self-end" fill="#bbb"><path d="M6 0h2v2H6zM3 3h2v2H3zM6 3h2v2H6zM0 6h2v2H0zM3 6h2v2H3zM6 6h2v2H6z" /></svg>
      </div>
    </div>
  );
}

function TypeDropdown() {
  return (
    <>
      <div className="absolute top-[440px] left-[133px] z-30 h-[17px] w-[537px] border border-[#005499] bg-[#cce4f7]" />
      <div className={`absolute top-0 left-[133px] z-30 flex h-[452px] w-[537px] border border-[#0f77cf] bg-white text-[12px] tracking-[-0.3px] text-black shadow-[3px_2px_3px_rgba(0,0,0,0.45)] ${SEGOE}`}>
        <div className="grow">
          {formats.map((f, i) => (
            <div key={f} className={`h-[15px] pl-[2px] leading-[15px] ${i === 24 ? "bg-[#3399ff] text-white" : ""}`}>{f}</div>
          ))}
        </div>
        <div className="ml-px flex w-[16px] flex-col items-center border-r border-white bg-[#f0f0f0] text-[#555]">
          <ChevronUp size={11} strokeWidth={4} className="mt-[3px]" />
          <div className="mt-[92px] h-[297px] w-full bg-[#cdcdcd]" />
          <div className="grow" />
          <ChevronDown size={11} strokeWidth={4} className="mb-[3px]" />
        </div>
      </div>
    </>
  );
}

export default function App() {
  return (
    <div className="relative flex h-[768px] w-[1366px] flex-col overflow-hidden bg-[#dfe2ea]">
      <TitleBar />
      <MenuBar />
      <CommandArea />
      <ToolTabs />
      <ToolBar />
      <div className="flex h-[527px] shrink-0">
        <SideTools />
        <div className="flex flex-col">
          <Viewports />
          <ViewTabs />
        </div>
        <PropertiesPanel />
      </div>
      <SnapBar />
      <StatusBar />
      <TaskBar />
      <SaveDialog />
      <TypeDropdown />
    </div>
  );
}
